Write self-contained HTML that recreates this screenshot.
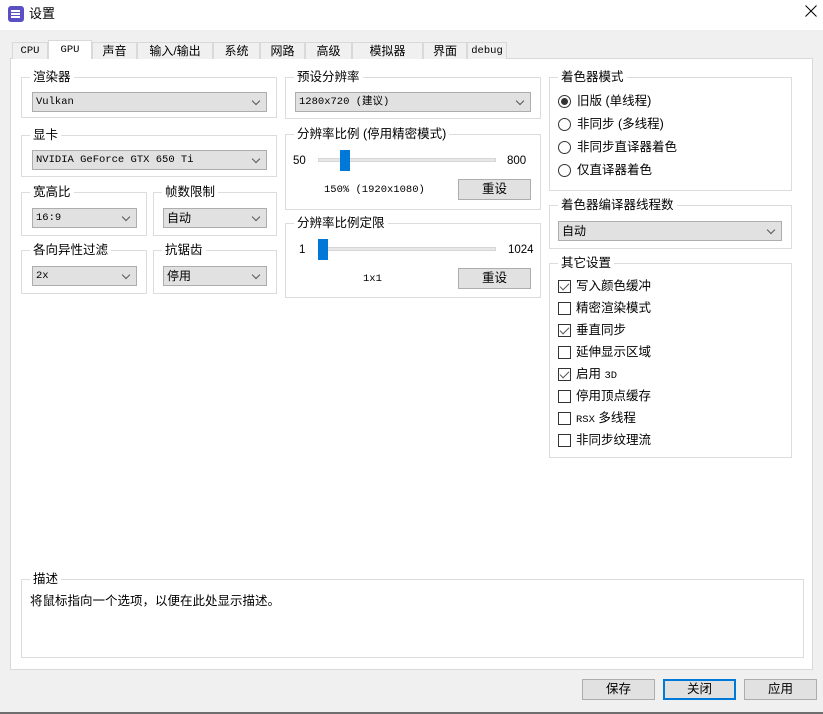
<!DOCTYPE html>
<html><head><meta charset="utf-8"><style>
*{box-sizing:border-box;margin:0;padding:0}
body{width:823px;height:714px;background:#f0f0f0;font-family:"Liberation Sans","Noto Sans CJK SC",sans-serif;font-size:12px;color:#000;position:relative;overflow:hidden}
.a{position:absolute}
.title{left:0;top:0;width:823px;height:30px;background:#fff}
.panel{left:10px;top:58px;width:803px;height:612px;background:#fff;border:1px solid #d9d9d9}
.tab{position:absolute;top:42px;height:17px;border:1px solid #d9d9d9;border-bottom:none;background:#f0f0f0;text-align:center;line-height:16px;font-size:12px}
.tab.sel{top:40px;height:19px;background:#fff;z-index:2}
.g{position:absolute;border:1px solid #dcdcdc}
.gl{position:absolute;top:-9px;left:8px;background:#fff;padding:0 3px;line-height:16px;font-size:12.5px}
.cb{position:absolute;height:20px;background:#e1e1e1;border:1px solid #adadad;padding-left:3px;line-height:18px;font-family:"Liberation Mono","Noto Sans CJK SC",monospace;font-size:10.5px}
.cb::after{content:"";position:absolute;right:7px;top:5px;width:5px;height:5px;border-right:1px solid #555;border-bottom:1px solid #555;transform:rotate(45deg)}
.btn{position:absolute;height:21px;background:#e1e1e1;border:1px solid #adadad;text-align:center;line-height:19px;font-size:12.5px}
.track{position:absolute;height:4px;background:#e7e7e7;border:1px solid #d6d6d6}
.thumb{position:absolute;width:10px;height:21px;background:#0078d7}
.rad{position:absolute;left:558px;width:13px;height:13px;border:1px solid #333;border-radius:50%;background:#fff}
.rad.on::after{content:"";position:absolute;left:2px;top:2px;width:7px;height:7px;border-radius:50%;background:#333}
.chk{position:absolute;left:558px;width:13px;height:13px;border:1px solid #333;background:#fff}
.chk.on::after{content:"";position:absolute;left:3px;top:0px;width:4px;height:8px;border-right:1.5px solid #555;border-bottom:1.5px solid #555;transform:rotate(45deg)}
.t{position:absolute;line-height:16px;font-size:12.5px;white-space:nowrap}
.m{font-family:"Liberation Mono","Noto Sans CJK SC",monospace;font-size:10.5px}
</style></head><body>
<div class="a title"></div>
<div class="a" style="left:8px;top:6px;width:16px;height:16px;background:#5b4fc4;border-radius:3px"></div>
<div class="a" style="left:11px;top:10px;width:9px;height:2px;background:#fff"></div>
<div class="a" style="left:11px;top:13px;width:9px;height:2px;background:#fff"></div>
<div class="a" style="left:11px;top:16px;width:9px;height:2px;background:#fff"></div>
<div class="t" style="left:29px;top:6px;font-size:13px">设置</div>
<svg class="a" style="left:805px;top:5px" width="12" height="12"><path d="M0.5 0.5L11.5 11.5M11.5 0.5L0.5 11.5" stroke="#000" stroke-width="1"/></svg>

<div class="a panel"></div>
<div class="tab m" style="left:12px;width:36px">CPU</div>
<div class="tab sel m" style="left:48px;width:44px;line-height:18px">GPU</div>
<div class="tab" style="left:92px;width:45px">声音</div>
<div class="tab" style="left:137px;width:76px">输入/输出</div>
<div class="tab" style="left:213px;width:47px">系统</div>
<div class="tab" style="left:260px;width:45px">网路</div>
<div class="tab" style="left:305px;width:47px">高级</div>
<div class="tab" style="left:352px;width:71px">模拟器</div>
<div class="tab" style="left:423px;width:44px">界面</div>
<div class="tab m" style="left:467px;width:40px">debug</div>

<div class="g" style="left:21px;top:77px;width:256px;height:41px"><span class="gl">渲染器</span></div>
<div class="cb" style="left:32px;top:92px;width:235px">Vulkan</div>
<div class="g" style="left:21px;top:135px;width:256px;height:42px"><span class="gl">显卡</span></div>
<div class="cb" style="left:32px;top:150px;width:235px">NVIDIA GeForce GTX 650 Ti</div>
<div class="g" style="left:21px;top:192px;width:126px;height:44px"><span class="gl">宽高比</span></div>
<div class="cb" style="left:32px;top:208px;width:105px">16:9</div>
<div class="g" style="left:153px;top:192px;width:124px;height:44px"><span class="gl">帧数限制</span></div>
<div class="cb" style="left:163px;top:208px;width:104px;font-family:'Noto Sans CJK SC',sans-serif;font-size:12px">自动</div>
<div class="g" style="left:21px;top:250px;width:126px;height:44px"><span class="gl">各向异性过滤</span></div>
<div class="cb" style="left:32px;top:266px;width:105px">2x</div>
<div class="g" style="left:153px;top:250px;width:124px;height:44px"><span class="gl">抗锯齿</span></div>
<div class="cb" style="left:163px;top:266px;width:104px;font-family:'Noto Sans CJK SC',sans-serif;font-size:12px">停用</div>

<div class="g" style="left:285px;top:77px;width:256px;height:42px"><span class="gl">预设分辨率</span></div>
<div class="cb" style="left:295px;top:92px;width:236px">1280x720 (建议)</div>
<div class="g" style="left:285px;top:134px;width:256px;height:76px"><span class="gl">分辨率比例 (停用精密模式)</span></div>
<div class="t" style="left:293px;top:153px;font-size:11.5px">50</div>
<div class="track" style="left:318px;top:158px;width:178px"></div>
<div class="thumb" style="left:340px;top:150px"></div>
<div class="t" style="left:507px;top:153px;font-size:11.5px">800</div>
<div class="t m" style="left:324px;top:182px">150% (1920x1080)</div>
<div class="btn" style="left:458px;top:179px;width:73px">重设</div>
<div class="g" style="left:285px;top:223px;width:256px;height:75px"><span class="gl">分辨率比例定限</span></div>
<div class="t" style="left:299px;top:242px;font-size:11.5px">1</div>
<div class="track" style="left:318px;top:247px;width:178px"></div>
<div class="thumb" style="left:318px;top:239px"></div>
<div class="t" style="left:508px;top:242px;font-size:11.5px">1024</div>
<div class="t m" style="left:363px;top:271px">1x1</div>
<div class="btn" style="left:458px;top:268px;width:73px">重设</div>

<div class="g" style="left:549px;top:77px;width:243px;height:114px"><span class="gl">着色器模式</span></div>
<div class="rad on" style="top:95px"></div><div class="t" style="left:577px;top:93px">旧版 (单线程)</div>
<div class="rad" style="top:118px"></div><div class="t" style="left:577px;top:116px">非同步 (多线程)</div>
<div class="rad" style="top:141px"></div><div class="t" style="left:577px;top:139px">非同步直译器着色</div>
<div class="rad" style="top:164px"></div><div class="t" style="left:577px;top:162px">仅直译器着色</div>
<div class="g" style="left:549px;top:205px;width:243px;height:44px"><span class="gl">着色器编译器线程数</span></div>
<div class="cb" style="left:558px;top:221px;width:224px;font-family:'Noto Sans CJK SC',sans-serif;font-size:12px">自动</div>
<div class="g" style="left:549px;top:263px;width:243px;height:195px"><span class="gl">其它设置</span></div>
<div class="chk on" style="top:280px"></div><div class="t" style="left:576px;top:278px">写入颜色缓冲</div>
<div class="chk" style="top:302px"></div><div class="t" style="left:576px;top:300px">精密渲染模式</div>
<div class="chk on" style="top:324px"></div><div class="t" style="left:576px;top:322px">垂直同步</div>
<div class="chk" style="top:346px"></div><div class="t" style="left:576px;top:344px">延伸显示区域</div>
<div class="chk on" style="top:368px"></div><div class="t" style="left:576px;top:366px">启用 <span class="m">3D</span></div>
<div class="chk" style="top:390px"></div><div class="t" style="left:576px;top:388px">停用顶点缓存</div>
<div class="chk" style="top:412px"></div><div class="t" style="left:576px;top:410px"><span class="m">RSX</span> 多线程</div>
<div class="chk" style="top:434px"></div><div class="t" style="left:576px;top:432px">非同步纹理流</div>

<div class="g" style="left:21px;top:579px;width:783px;height:79px"><span class="gl">描述</span></div>
<div class="t" style="left:30px;top:593px">将鼠标指向一个选项，以便在此处显示描述。</div>

<div class="btn" style="left:582px;top:679px;width:73px">保存</div>
<div class="btn" style="left:663px;top:679px;width:73px;border:2px solid #0078d7;line-height:17px">关闭</div>
<div class="btn" style="left:744px;top:679px;width:73px">应用</div>
<div class="a" style="left:0;top:712px;width:823px;height:2px;background:#6e6e6e"></div>
</body></html>
